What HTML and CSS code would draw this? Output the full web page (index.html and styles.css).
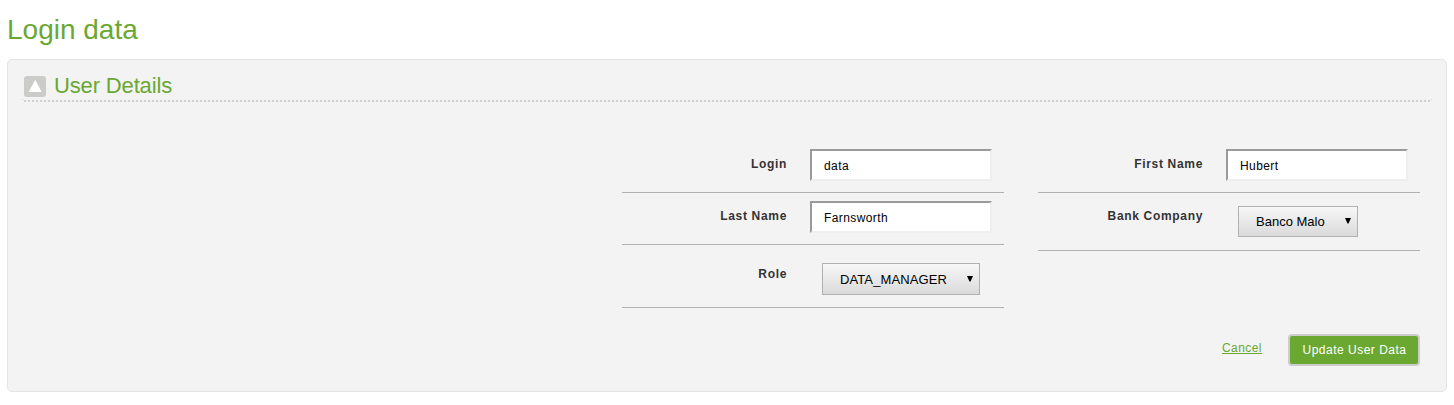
FILE: index.html
```html
<!DOCTYPE html>
<html lang="en">
<head>
<meta charset="utf-8">
<title>Login data</title>
<link rel="stylesheet" href="styles.css">
</head>
<body>
<h1 class="page-title">Login data</h1>
<section class="panel">
  <header class="panel-header">
    <svg class="toggle" width="22" height="21" viewBox="0 0 22 21"><rect width="22" height="21" rx="3" fill="#cbcbc9"/><path d="M11.2 3.8 17.7 16H4.7Z" fill="#fff"/></svg>
    <h2 class="panel-title">User Details</h2>
  </header>
  <svg class="divider" width="1411" height="3" viewBox="0 0 1411 3"><path d="M0 .5H1M1409 .5H1410" stroke="#d4d4d4"/><path d="M2 2H1409" stroke="#cfcfcf" stroke-width="2" stroke-dasharray="2 2"/></svg>
  <form class="fields">
    <div class="column">
      <div class="row"><label class="label" for="login">Login</label><input class="input" id="login" value="data"></div>
      <div class="row"><label class="label" for="last">Last Name</label><input class="input" id="last" value="Farnsworth"></div>
      <div class="row row-role"><span class="label">Role</span><div class="select select-role"><span>DATA_MANAGER</span><svg class="arrow" width="6" height="6" viewBox="0 0 6 6"><path d="M0 0H6L3.5 5.5H2.5Z"/></svg></div></div>
    </div>
    <div class="column">
      <div class="row"><label class="label" for="first">First Name</label><input class="input" id="first" value="Hubert"></div>
      <div class="row row-bank"><span class="label">Bank Company</span><div class="select"><span>Banco Malo</span><svg class="arrow" width="6" height="6" viewBox="0 0 6 6"><path d="M0 0H6L3.5 5.5H2.5Z"/></svg></div></div>
    </div>
  </form>
  <footer class="actions">
    <a class="cancel" href="#">Cancel</a>
    <button class="submit" type="button">Update User Data</button>
  </footer>
</section>
</body>
</html>
```
FILE: styles.css
```css
* { box-sizing: border-box; }
body { margin: 0; background: #fff; font-family: "Liberation Sans", Arial, sans-serif; font-size: 12px; color: #333; }
.page-title { margin: 0; padding: 14px 0 0 7px; height: 59px; font-size: 28px; line-height: 32px; font-weight: normal; color: #6aa832; }
.panel { width: 1440px; height: 333px; margin-left: 7px; border: 1px solid #e4e4e4; border-radius: 5px; background: #f3f3f3; }
.panel-header { display: flex; height: 39px; padding: 16px 0 0 16px; }
.toggle { display: block; flex: none; }
.panel-title { margin: -3px 0 0 8px; font-size: 22px; line-height: 26px; font-weight: normal; letter-spacing: -.15px; color: #6aa832; }
.divider { display: block; margin-left: 14px; }
.fields { display: flex; gap: 34px; margin: 39px 0 0 614px; height: 170px; }
.column { width: 382px; }
.row { display: flex; height: 52px; padding-top: 8px; border-bottom: 1px solid #b1b1b1; }
.label { width: 165px; margin-right: 23px; padding-top: 8px; line-height: 15px; font-weight: bold; letter-spacing: .67px; text-align: right; flex: none; }
.input { width: 182px; height: 32px; padding: 2px 12px 0; border: 2px solid; border-color: #9a9a9a #eee #eee #9a9a9a; background: #fff; font: 12px "Liberation Sans", Arial, sans-serif; letter-spacing: .4px; color: #000; }
.row-bank { height: 58px; }
.row-role { height: 63px; }
.row-role .label { padding-top: 14px; }
.select { display: flex; align-items: center; justify-content: space-between; width: 120px; height: 31px; margin: 5px 0 0 12px; padding: 0 6px 0 17px; border: 1px solid #b1b1b1; background: linear-gradient(#f7f7f7, #dadada); font-size: 13px; color: #000; }
.select-role { width: 158px; height: 32px; margin-top: 10px; letter-spacing: .1px; }
.arrow { display: block; margin-top: -1px; }
.actions { display: flex; justify-content: flex-end; padding-right: 26px; margin-top: 23px; }
.cancel { margin-right: 26px; padding-top: 6px; line-height: 16px; letter-spacing: .45px; color: #6aa832; }
.submit { width: 132px; height: 32px; padding: 0 0 0 1px; border: 2px solid #ccc; border-radius: 4px; background: #6aa832; font: 12px "Liberation Sans", Arial, sans-serif; letter-spacing: .5px; color: #fff; }
```
